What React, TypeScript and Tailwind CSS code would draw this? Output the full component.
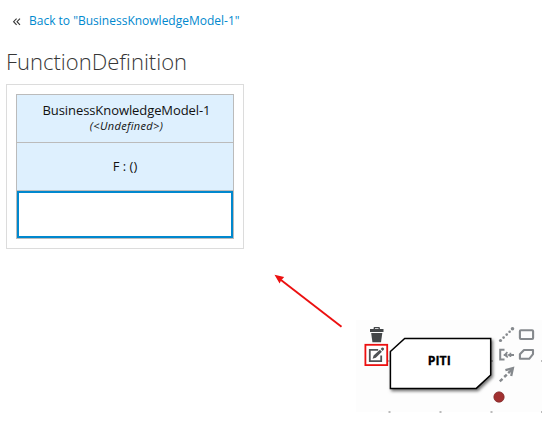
import React from "react";

function ExpressionTable() {
  return (
    <div className="ml-1.5 h-[165px] w-[238px] border border-[#dcdcdc] bg-white p-[9px]">
      <div className="flex h-[145px] w-[218px] flex-col border border-[#bbb] text-[13px] text-[#111]">
        <div className="flex h-12 flex-col items-center border-b border-[#bbb] bg-[#def0fe] pl-[3px] pt-[7px]">
          <span className="h-4 text-[13px] leading-4 tracking-[-0.08px] whitespace-nowrap">BusinessKnowledgeModel-1</span>
          <span className="h-4 text-[11px] leading-4 tracking-[0.34px] italic">(&lt;Undefined&gt;)</span>
        </div>
        <div className="flex h-12 items-center justify-center border-b border-[#bbb] bg-[#def0fe]">
          <span>F : ()</span>
        </div>
        <div className="h-[47px] border-2 border-[#0088ce] bg-white" />
      </div>
    </div>
  );
}

function Diagram() {
  return (
    <svg className="block" width="277" height="166" viewBox="265 265 277 166">
      <defs>
        <filter id="shadow" x="-10%" y="-20%" width="125%" height="150%">
          <feDropShadow dx="1.5" dy="2" stdDeviation="1.5" floodColor="#000" floodOpacity="0.55" />
        </filter>
      </defs>
      <rect x="356" y="320" width="186" height="92" fill="#fdfdfd" />

      <path d="M341.5 326.8 281 280" stroke="#ec1010" strokeWidth="1.9" fill="none" />
      <path d="M274.5 274.7 284.2 277 281.2 280.2 279.6 283.4Z" fill="#ec1010" />

      <g fill="#bbb">
        <rect x="388.5" y="411" width="2" height="2" />
        <rect x="439.5" y="411" width="2" height="2" />
        <rect x="490.5" y="411" width="2" height="2" />
        <rect x="541" y="411" width="1" height="2" />
        <rect x="541" y="360" width="1" height="2" />
        <rect x="388" y="360" width="1.5" height="2" />
        <rect x="491" y="360" width="2" height="2" />
      </g>

      <path
        d="M390.4 351.5 404.7 338.4H490.7V375L476.3 388.4H390.4Z"
        fill="#fff" stroke="#000" strokeWidth="1.5" filter="url(#shadow)"
      />
      <text
        x="439.3" y="365" textAnchor="middle" textLength="23" lengthAdjust="spacingAndGlyphs"
        className="text-[13px] font-bold font-['Open_Sans',sans-serif]" stroke="#000" strokeWidth="0.3"
      >
        PITI
      </text>

      <g fill="#444749">
        <path fillRule="evenodd" d="M370 329H373.6V327.9Q373.6 327 374.5 327H379Q379.9 327 379.9 327.9V329H383.5V332H370ZM375 329H378.5V328.2H375Z" />
        <path d="M371.2 333H382.3L381 342.3H372.4Z" />
      </g>
      <rect x="365.4" y="344.8" width="21.8" height="20.3" fill="#fff" stroke="#ec1010" strokeWidth="1.8" />
      <path d="M378.2 349.8H369.8V361.2H381.2V355.5" fill="none" stroke="#505356" strokeWidth="1.8" />
      <path d="M372.6 358.8 373.6 355.6 379.9 349.7 381.9 351.7 375.8 357.8ZM380.7 348.9 382 347.6Q382.6 347.2 383.3 347.8L383.8 348.3Q384.4 349 383.9 349.6L382.6 350.9Z" fill="#505356" />

      <g fill="#85898d">
        <circle cx="500.5" cy="340.5" r="1.6" />
        <circle cx="503.6" cy="337.6" r="1.3" />
        <circle cx="506.7" cy="334.6" r="1.3" />
        <circle cx="509.6" cy="331.7" r="1.3" />
        <circle cx="512.5" cy="328.8" r="1.8" />
      </g>
      <g fill="none" stroke="#85898d" strokeWidth="2.1">
        <rect x="519.9" y="330.2" width="13.2" height="8.8" rx="1" />
        <path d="M524 350H533V354.2L529.2 358.8H519.9V354.2Z" strokeLinejoin="round" />
        <path d="M504.5 349.7H500.2V359.6H504.5" strokeWidth="2" />
        <path d="M503.8 355H507.4M508.2 355H514" strokeWidth="2.1" />
        <path d="M507.4 352.2 504.8 354.9 507.8 357.4M510.4 352.8V357" strokeWidth="1.7" />
        <path d="M499.8 381.3 502.5 378.8M504.2 377 506.8 374.6M508.2 373.2 512.5 369" strokeWidth="2.4" />
        <path d="M505.4 370.2 512.9 368.2 511.2 376" strokeWidth="2.3" />
      </g>
      <circle cx="499" cy="397" r="5.2" fill="#a13030" stroke="#7d2929" strokeWidth="0.7" />
    </svg>
  );
}

export default function App() {
  return (
    <main className="flex h-[431px] w-[542px] flex-col overflow-hidden bg-white font-['Open_Sans',sans-serif]">
      <nav className="flex h-[41px] shrink-0 items-center pl-3 pt-px text-xs">
        <svg className="mr-2 block shrink-0" width="9" height="9" viewBox="0 0 9 9" fill="none" stroke="#363636" strokeWidth="1.1">
          <path d="M4.6 1.6 1.6 4.7 4.6 7.8M8 1.6 5 4.7 8 7.8" />
        </svg>
        <a className="whitespace-nowrap text-[#0088ce]">Back to "BusinessKnowledgeModel-1"</a>
      </nav>
      <h1 className="h-[43px] shrink-0 pl-1.5 text-[22px] leading-[41px] font-light text-[#363636]">FunctionDefinition</h1>
      <div className="h-[181px] shrink-0">
        <ExpressionTable />
      </div>
      <div className="flex shrink-0 justify-end">
        <Diagram />
      </div>
    </main>
  );
}
